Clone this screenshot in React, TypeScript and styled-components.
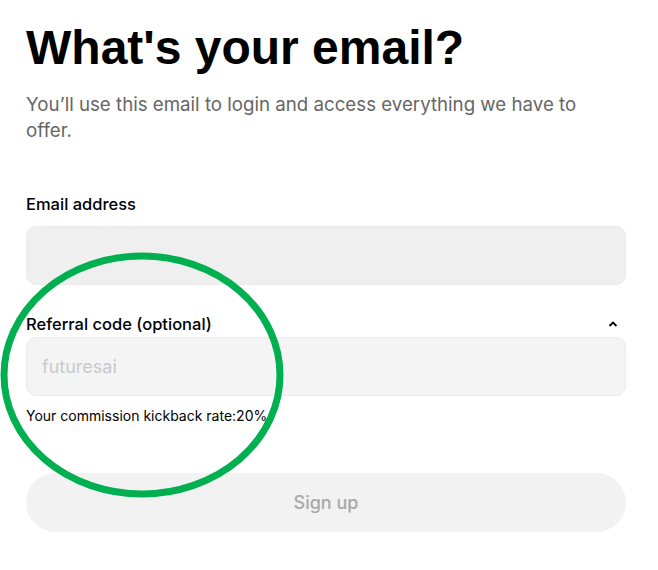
import React from "react";
import styled, { createGlobalStyle } from "styled-components";

const Global = createGlobalStyle`
  html, body { margin: 0; padding: 0; background: #fff; }
  body { font-family: Inter, "Liberation Sans", Arial, sans-serif; }
`;

const Page = styled.div`
  position: relative;
  width: 658px;
  height: 570px;
  overflow: hidden;
  background: #fff;
`;

const Form = styled.div`
  display: flex;
  flex-direction: column;
  width: 600px;
  padding: 18px 0 0 26px;
`;

const Title = styled.h1`
  margin: 0;
  font-family: "Liberation Sans", Arial, sans-serif;
  font-weight: 700;
  font-size: 48px;
  line-height: 60px;
  color: #000;
  letter-spacing: 0;
`;

const Subtitle = styled.p`
  margin: 14px 0 0;
  max-width: 575px;
  font-size: 18.7px;
  line-height: 26px;
  color: #666;
`;

const Field = styled.div<{ $top: number }>`
  display: flex;
  flex-direction: column;
  margin-top: ${(p) => p.$top}px;
`;

const LabelRow = styled.div`
  display: flex;
  align-items: center;
  justify-content: space-between;
  height: 22px;
`;

const Label = styled.label`
  font-size: 16.5px;
  font-weight: 500;
  color: #000;
`;

const Input = styled.div<{ $bg: string; $gap: number }>`
  margin-top: ${(p) => p.$gap}px;
  height: 59px;
  box-sizing: border-box;
  border-radius: 10px;
  background: ${(p) => p.$bg};
  border: 1px solid #ebebeb;
  display: flex;
  align-items: center;
  padding: 0 15px;
  font-size: 18px;
  color: #c9c9c9;
`;

const Note = styled.div`
  margin-top: 11px;
  font-size: 14px;
  line-height: 18px;
  color: #000;
`;

const Button = styled.div`
  margin-top: 48px;
  height: 59px;
  border-radius: 30px;
  background: #f2f2f2;
  display: flex;
  align-items: center;
  justify-content: center;
  font-size: 18px;
  font-weight: 500;
  color: #a8a8a8;
`;

const Chevron = styled.svg`
  width: 12px;
  height: 8px;
  margin-right: 7px;
`;

const Annotation = styled.svg`
  position: absolute;
  left: 0;
  top: 0;
  pointer-events: none;
`;

export default function App() {
  return (
    <Page>
      <Global />
      <Form>
        <Title>What's your email?</Title>
        <Subtitle>You’ll use this email to login and access everything we have to offer.</Subtitle>
        <Field $top={49}>
          <LabelRow>
            <Label>Email address</Label>
          </LabelRow>
          <Input $bg="#efefef" $gap={11} />
        </Field>
        <Field $top={28}>
          <LabelRow>
            <Label>Referral code (optional)</Label>
            <Chevron viewBox="0 0 12 8">
              <path d="M2.5 6 L6 2.5 L9.5 6" fill="none" stroke="#000" strokeWidth="1.8" />
            </Chevron>
          </LabelRow>
          <Input $bg="#f4f4f4" $gap={2}>futuresai</Input>
          <Note>Your commission kickback rate:20%</Note>
        </Field>
        <Button>Sign up</Button>
      </Form>
      <Annotation width="658" height="570">
        <ellipse cx="142" cy="375" rx="138" ry="119" fill="none" stroke="#00b050" strokeWidth="7" />
      </Annotation>
    </Page>
  );
}
